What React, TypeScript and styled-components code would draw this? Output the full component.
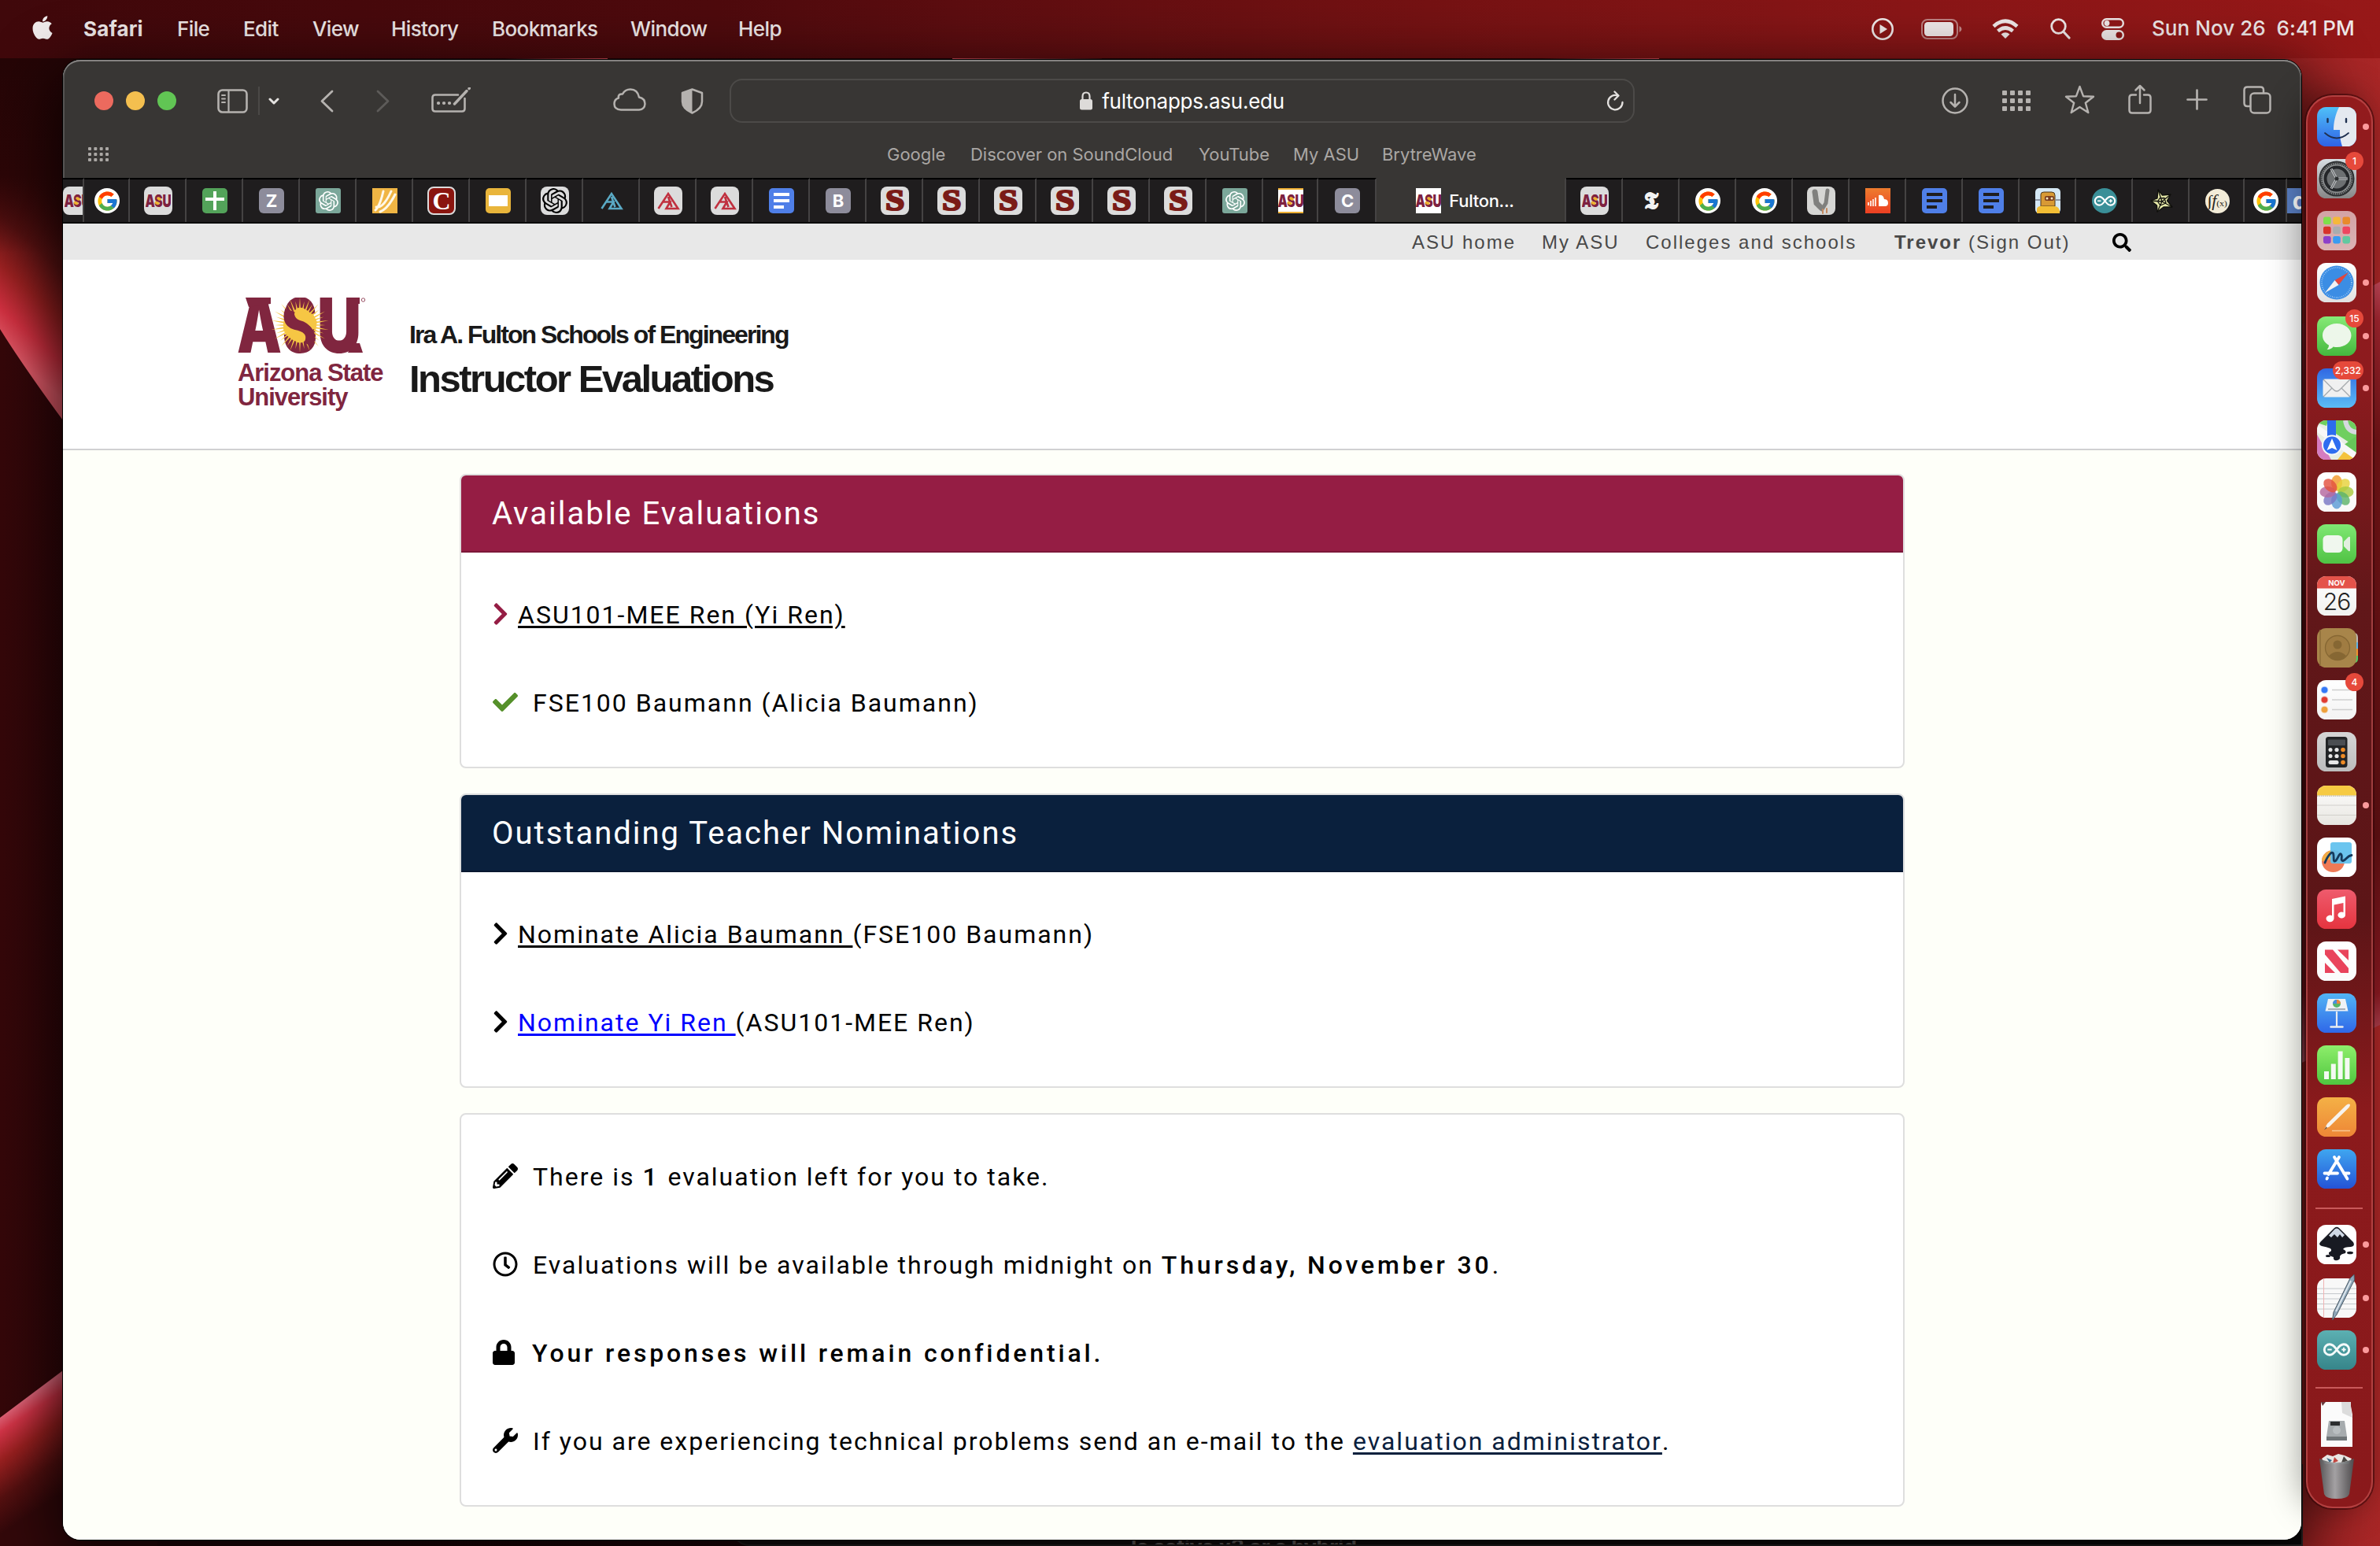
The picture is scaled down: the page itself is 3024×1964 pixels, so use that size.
import React from 'react';
import styled, { createGlobalStyle, css } from 'styled-components';
import { FaApple, FaChevronRight, FaCheck, FaPencilAlt, FaRegClock, FaLock, FaWrench, FaSearch } from 'react-icons/fa';
import { FcGoogle } from 'react-icons/fc';
import { SiOpenai } from 'react-icons/si';

const GlobalStyle = createGlobalStyle`
  *, *::before, *::after { box-sizing: border-box; }
  html, body { margin: 0; padding: 0; background: #1d0406; }
  body { width: 3024px; height: 1964px; overflow: hidden; }
  svg { display: block; flex: none; }
`;

const ui = css`
  font-family: Inter, "Liberation Sans", sans-serif;
`;

const Desktop = styled.div`
  position: relative;
  width: 3024px;
  height: 1964px;
  overflow: hidden;
  display: flex;
  flex-direction: column;
  isolation: isolate;
`;

const WallpaperLayer = styled.div`
  position: absolute;
  inset: 0;
  z-index: -1;
`;

const BackWindow = styled.div`
  position: absolute;
  left: 930px;
  top: 1860px;
  width: 1996px;
  height: 104px;
  padding: 88px 0 0 505px;
  border-bottom-left-radius: 22px;
  background: linear-gradient(90deg, #191414, #14100f 60%, #0a0a0a);
  border: 2px solid #2e2a2a;
  color: #8a8482;
  font: 700 27px/32px Inter, "Liberation Sans", sans-serif;
  letter-spacing: -0.4px;
  white-space: nowrap;
  overflow: hidden;
`;

/* ---------- menu bar ---------- */

const MenuBar = styled.header`
  ${ui}
  height: 74px;
  flex: none;
  display: flex;
  align-items: center;
  padding-left: 38px;
  padding-bottom: 1px;
  background: linear-gradient(90deg, #40080b 0%, #4e0a0d 30%, #5c0d10 40%, #751213 60%, #8a1617 80%, #971818 100%);
  color: #f0e9e9;
  font-size: 26px;
  font-weight: 500;
  white-space: nowrap;
`;

const MenuApple = styled.div`
  width: 68px;
  margin-top: -4px;
  margin-left: -1px;
  margin-right: 1px;
`;

const MenuItem = styled.div<{ $w: number; $bold?: boolean; $ls?: number }>`
  width: ${p => p.$w}px;
  margin-top: -1px;
  font-weight: ${p => (p.$bold ? 700 : 500)};
  letter-spacing: ${p => p.$ls ?? -0.6}px;
`;

const StatusArea = styled.div`
  margin-left: auto;
  display: flex;
  align-items: center;
`;

const StatusIcon = styled.div<{ $w: number }>`
  width: ${p => p.$w}px;
`;

const Clock = styled.div`
  width: 290px;
  margin-top: -2px;
  letter-spacing: 0.05px;
  white-space: pre;
`;

/* ---------- window ---------- */

const Workspace = styled.div`
  flex: 1;
  display: flex;
  align-items: flex-start;
  padding: 2px 9px 8px 80px;
`;

const Window = styled.main`
  width: 2844px;
  height: 1880px;
  flex: none;
  display: flex;
  flex-direction: column;
  border-radius: 22px;
  overflow: hidden;
  background: #fefff9;
  box-shadow: 0 0 0 1px #000, 0 24px 80px 10px rgba(0, 0, 0, 0.75);
`;

const Chrome = styled.div`
  ${ui}
  background: #383634;
  border-radius: 22px 22px 0 0;
  box-shadow: inset 0 2px 0 #858281, inset 2px 0 0 #555352, inset -2px 0 0 #555352;
`;

const Toolbar = styled.div`
  height: 104px;
  display: flex;
  align-items: center;
  padding-left: 40px;
  color: #b5b2af;
`;

const Lights = styled.div`
  display: flex;
  gap: 16px;
`;

const Light = styled.i<{ $c: string }>`
  width: 24px;
  height: 24px;
  border-radius: 50%;
  background: ${p => p.$c};
`;

const Tool = styled.div<{ $ml: number; $w: number; $c?: string; $up?: number }>`
  margin-left: ${p => p.$ml}px;
  width: ${p => p.$w}px;
  flex: none;
  padding-bottom: ${p => p.$up ?? 0}px;
  color: ${p => p.$c ?? 'inherit'};
`;

const Divider = styled.i`
  width: 2px;
  height: 36px;
  margin-left: 13px;
  background: #4b4947;
`;

const AddressBar = styled.div`
  width: 1150px;
  height: 56px;
  margin-left: 33px;
  border: 2px solid #4c4a48;
  border-radius: 16px;
  display: grid;
  grid-template-columns: 1fr auto 1fr;
  align-items: center;
  color: #fff;
  font-size: 26px;
  letter-spacing: -0.25px;
`;

const Url = styled.div`
  grid-column: 2;
  display: flex;
  align-items: center;
  gap: 12px;
`;

const Reload = styled.div`
  justify-self: end;
  padding-right: 11px;
  color: #e3e1df;
`;

const BookmarkRow = styled.div`
  height: 46px;
  padding: 0 0 14px 32px;
  display: flex;
  align-items: center;
  color: #aaa7a4;
  font-size: 22px;
  white-space: nowrap;
`;

const BookmarkGrid = styled.div`
  width: 1015px;
`;

const Bookmark = styled.div<{ $w: number }>`
  width: ${p => p.$w}px;
  letter-spacing: -0.02px;
`;

const TabStrip = styled.div`
  height: 58px;
  display: flex;
  background: #1f1d1e;
  border-bottom: 2px solid #000;
`;

const Tab = styled.div<{ $w?: number; $active?: boolean; $clip?: boolean }>`
  width: ${p => p.$w ?? 72}px;
  flex: none;
  display: flex;
  align-items: center;
  justify-content: ${p => (p.$clip ? 'flex-start' : 'center')};
  overflow: hidden;
  gap: 10px;
  padding: ${p => (p.$active ? '0 14px 0 0' : p.$clip ? '0' : '0 0 0 2px')};
  color: #fff;
  font-size: 22px;
  font-weight: 500;
  letter-spacing: -0.3px;
  border-right: 2px solid #454343;
  border-top: 2px solid ${p => (p.$active ? '#383634' : '#000')};
  background: ${p => (p.$active ? '#383634' : 'transparent')};
`;

const FavBox = styled.div<{ $bg?: string; $r?: number; $s?: number }>`
  width: ${p => p.$s ?? 32}px;
  height: ${p => p.$s ?? 32}px;
  flex: none;
  border-radius: ${p => p.$r ?? 6}px;
  background: ${p => p.$bg ?? 'transparent'};
  display: flex;
  align-items: center;
  justify-content: center;
  overflow: hidden;
  color: #fff;
`;

const FavRing = styled(FavBox)`
  border: 2px solid #dcdcdc;
`;

const FavLetter = styled.b<{ $f?: string; $size?: number; $c?: string }>`
  font-family: ${p => p.$f ?? 'Inter'}, "Liberation Sans", sans-serif;
  font-size: ${p => p.$size ?? 22}px;
  line-height: 1;
  color: ${p => p.$c ?? '#fff'};
`;

/* ---------- ASU page ---------- */

const UtilityNav = styled.nav`
  height: 46px;
  padding: 2px 0 0 1714px;
  display: flex;
  align-items: center;
  background: #e8e8e8;
  color: #484848;
  font: 400 24px/28px "Liberation Sans", Arial, sans-serif;
  letter-spacing: 2px;
  white-space: nowrap;
`;

const NavLink = styled.span<{ $w: number }>`
  width: ${p => p.$w}px;
`;

const SiteHeader = styled.div`
  height: 242px;
  padding: 48px 0 0 222px;
  display: flex;
  background: #fff;
  border-bottom: 2px solid #d0d0d2;
  font-family: "Liberation Sans", Arial, sans-serif;
`;

const Brand = styled.div`
  width: 218px;
`;

const BrandName = styled.div`
  margin-top: 8px;
  color: #80263f;
  font-size: 31px;
  font-weight: 700;
  line-height: 31px;
  letter-spacing: -1.05px;
  white-space: nowrap;
`;

const SiteTitles = styled.div`
  padding-top: 25px;
  color: #191919;
  font-weight: 700;
  white-space: nowrap;
`;

const College = styled.div`
  font-size: 32px;
  line-height: 44px;
  letter-spacing: -1.95px;
`;

const SiteName = styled.div`
  margin-top: 1px;
  font-size: 49px;
  line-height: 66px;
  letter-spacing: -2.5px;
`;

const Content = styled.div`
  flex: 1;
  padding: 30px 0 0 504px;
  display: flex;
  flex-direction: column;
  gap: 32px;
  background: #fefff9;
  font-family: Roboto, sans-serif;
`;

const Card = styled.section<{ $h: number }>`
  width: 1836px;
  height: ${p => p.$h}px;
  flex: none;
  background: #fff;
  border: 2px solid #dedede;
  border-radius: 8px;
  overflow: hidden;
`;

const CardHead = styled.h2<{ $bg: string; $edge: string }>`
  height: 98px;
  margin: 0;
  padding: 0 38px 0 39px;
  background: ${p => p.$bg};
  border-bottom: 2px solid ${p => p.$edge};
  color: #fff;
  font-size: 40px;
  font-weight: 400;
  line-height: 98px;
  letter-spacing: 2px;
`;

const CardBody = styled.div`
  padding: 55px 0 0 40px;
  display: flex;
  flex-direction: column;
  gap: 64px;
`;

const Line = styled.div`
  height: 48px;
  display: flex;
  align-items: center;
  color: #000;
  font-size: 32px;
  line-height: 48px;
  letter-spacing: 2px;
  white-space: pre;
`;

const LineIcon = styled.span<{ $w: number; $c?: string }>`
  width: ${p => p.$w}px;
  flex: none;
  margin-top: -2px;
  color: ${p => p.$c ?? '#000'};
`;

const ChevronIcon = styled(FaChevronRight)`
  width: 20px;
  height: 32px;
`;

const LockIcon = styled(FaLock)`
  width: 28px;
  height: 32px;
`;

const A = styled.a<{ $c?: string }>`
  color: ${p => p.$c ?? '#000'};
  text-decoration: underline;
  text-decoration-thickness: 3px;
  text-underline-offset: 3px;
`;

const Strong = styled.strong`
  font-weight: 500;
  letter-spacing: 3.86px;
`;

/* ---------- dock ---------- */

const Dock = styled.aside`
  ${ui}
  position: relative;
  width: 85px;
  height: 1795px;
  flex: none;
  margin: 45px 0 0 6px;
  padding: 13px 0 0 12px;
  border: 2px solid rgba(205, 90, 90, 0.6);
  border-radius: 34px;
  background: linear-gradient(180deg, #921b1d 0%, #8d1b1e 20%, #611719 36%, #5c1517 58%, #8b1a1c 72%, #8a191b 100%);
  box-shadow: 0 0 0 2px rgba(50, 4, 6, 0.55), -6px 0 44px rgba(0, 0, 0, 0.38);
  display: flex;
  flex-direction: column;
`;

const DockItem = styled.div<{ $mb?: number; $h?: number; $run?: boolean }>`
  position: relative;
  width: 50px;
  height: ${p => p.$h ?? 50}px;
  margin-bottom: ${p => p.$mb ?? 16}px;
  flex: none;
  ${p =>
    p.$run &&
    css`
      &::after {
        content: '';
        position: absolute;
        left: 58px;
        top: 21px;
        width: 8px;
        height: 8px;
        border-radius: 50%;
        background: #fb9a9c;
      }
    `}
`;

const DockRule = styled.i<{ $mb: number }>`
  width: 60px;
  height: 2px;
  margin: 0 0 ${p => p.$mb}px -2px;
  flex: none;
  background: #c9595a;
`;

const Badge = styled.span`
  position: absolute;
  right: -9px;
  top: -9px;
  min-width: 23px;
  height: 23px;
  padding: 0 3px;
  border-radius: 12px;
  background: #e6493b;
  color: #fff;
  font-size: 12px;
  font-weight: 500;
  line-height: 23px;
  text-align: center;
`;

/* ---------- drawings ---------- */

function Wallpaper() {
  return (
    <svg width="3024" height="1964" viewBox="0 0 3024 1964">
      <defs>
        <linearGradient id="wpBase" x1="0" x2="1">
          <stop offset="0" stopColor="#350709" />
          <stop offset="0.1" stopColor="#26050a" />
          <stop offset="0.6" stopColor="#200406" />
          <stop offset="0.9" stopColor="#8e1c1d" />
          <stop offset="1" stopColor="#a92727" />
        </linearGradient>
        <linearGradient id="wpTop" gradientUnits="userSpaceOnUse" x1="130" y1="300" x2="4" y2="440">
          <stop offset="0" stopColor="#2d0607" />
          <stop offset="0.35" stopColor="#5a1212" />
          <stop offset="0.6" stopColor="#982020" />
          <stop offset="0.82" stopColor="#d03040" />
          <stop offset="1" stopColor="#e05a68" />
        </linearGradient>
        <linearGradient id="wpTopFade" x1="0" y1="0" x2="0" y2="1">
          <stop offset="0" stopColor="#250506" />
          <stop offset="0.45" stopColor="#2c0607" />
          <stop offset="0.75" stopColor="#3c090a" stopOpacity="0" />
        </linearGradient>
        <linearGradient id="wpLow" gradientUnits="userSpaceOnUse" x1="20" y1="1785" x2="90" y2="1890">
          <stop offset="0" stopColor="#e0667a" />
          <stop offset="0.14" stopColor="#d23447" />
          <stop offset="0.38" stopColor="#9b2020" />
          <stop offset="0.7" stopColor="#551010" />
          <stop offset="1" stopColor="#33080a" />
        </linearGradient>
        <linearGradient id="wpRight" x1="0" y1="0" x2="0" y2="1">
          <stop offset="0" stopColor="#c4485a" />
          <stop offset="0.05" stopColor="#a32630" />
          <stop offset="0.2" stopColor="#751518" />
          <stop offset="0.7" stopColor="#611114" />
          <stop offset="0.9" stopColor="#8a1a22" />
          <stop offset="1" stopColor="#d86a80" />
        </linearGradient>
        <linearGradient id="wpEdgeUp"><stop offset="0" stopColor="#d8505c" stopOpacity="0" /><stop offset="1" stopColor="#d8505c" /></linearGradient>
        <linearGradient id="wpEdgeDown"><stop offset="0" stopColor="#d8505c" /><stop offset="1" stopColor="#d8505c" stopOpacity="0.100" /></linearGradient>
      </defs>
      <rect width="3024" height="1964" fill="url(#wpBase)" />
      <path d="M0 74H200V700Q120 590 80 534Q30 466 0 418Z" fill="url(#wpTop)" />
      <rect y="74" width="200" height="330" fill="url(#wpTopFade)" />
      <path d="M0 1801L80 1741L200 1660V1964H0Z" fill="url(#wpLow)" />
      <path d="M2900 425L3024 358V1302L2900 1362Z" fill="url(#wpRight)" />
      <path d="M640 74H772V75.500H640Z" fill="url(#wpEdgeUp)" />
      <path d="M1210 74H1400V75.500H1210Z" fill="url(#wpEdgeDown)" />
      <path d="M1960 74H2108V75.500H1960Z" fill="url(#wpEdgeUp)" />
    </svg>
  );
}

const stroke = { fill: 'none', stroke: 'currentColor', strokeLinecap: 'round', strokeLinejoin: 'round' } as const;

function DotGrid({ w, h, s }: { w: number; h: number; s: number }) {
  const cells: React.ReactNode[] = [];
  for (let r = 0; r < 3; r++)
    for (let c = 0; c < 4; c++)
      cells.push(<rect key={`${r}-${c}`} x={(c * (w - s)) / 3} y={(r * (h - s)) / 2} width={s} height={s} rx={1} fill="currentColor" />);
  return <svg width={w} height={h}>{cells}</svg>;
}

function AsuLogo() {
  const rays = Array.from({ length: 36 }, (_, i) => {
    const t = (i / 36) * Math.PI * 2;
    const d = 0.06;
    const p = (a: number, r: number) => `${79 + Math.cos(a) * r * 0.95},${35 + Math.sin(a) * r * 0.9}`;
    const len = 34 + (i % 2) * 5;
    return `M${p(t - d, 20)}L${p(t, len)}L${p(t + d, 20)}Z`;
  }).join('');
  const letter = { fontFamily: 'Inter, "Liberation Sans", sans-serif', fontWeight: 900, fontSize: 96, fill: '#80263f', lengthAdjust: 'spacingAndGlyphs' } as const;
  return (
    <svg width="166" height="72" viewBox="0 0 166 72">
      <text {...letter} x="-1" y="70" textLength="57">A</text>
      <text {...letter} x="101" y="70" textLength="56">U</text>
      <path d="M10 0H42V8L14 12Z M142 0H155V8H142Z M146 58L155 58L159 70H140Z" fill="#80263f" />
      <ellipse cx="79" cy="35" rx="21" ry="23" fill="#f6c644" />
      <text {...letter} x="56.500" y="70" textLength="45" fontWeight={800}>S</text>
      <path d={rays} fill="#f6c644" />
      <path d="M72 21Q75 13 84 14Q95 19 101 31Q99 40 95 41Q89 31 79 29Q73 27 72 21Z" fill="#f6c644" />
      <path d="M86 50Q83 57 75 56Q63 52 58 40Q59 31 63 29Q69 39 79 41Q86 44 86 50Z" fill="#f6c644" />
      <path d="M66 16Q60 34 78 36Q98 42 90 60" fill="none" stroke="#80263f" strokeWidth="12" />
      <circle cx="159.500" cy="3" r="2.200" fill="none" stroke="#80263f" strokeWidth="0.800" />
    </svg>
  );
}

function AsuMark({ w = 32 }: { w?: number }) {
  return (
    <svg width={w} height="18" viewBox="0 0 32 18">
      <text x="-0.500" y="16.500" fontFamily="Inter, sans-serif" fontWeight="900" fontSize="21.500" fill="#7d2140" textLength="33" lengthAdjust="spacingAndGlyphs">ASU</text>
      <ellipse cx="17" cy="6.500" rx="3" ry="1.800" fill="#eeb22e" transform="rotate(25 17 6.500)" />
      <ellipse cx="14.500" cy="12" rx="3" ry="1.800" fill="#eeb22e" transform="rotate(25 14.500 12)" />
    </svg>
  );
}

const FavAsu = ({ bg = '#dcdcdc', s = 36 }: { bg?: string; s?: number }) => (
  <FavBox $bg={bg} $s={s} $r={s === 36 ? 8 : 0}><AsuMark /></FavBox>
);
const FavGoogle = () => <FavBox $bg="#fff" $r={16}><FcGoogle size={29} /></FavBox>;
const FavLetterTile = ({ ch }: { ch: string }) => <FavBox $bg="#8d8c9b"><FavLetter>{ch}</FavLetter></FavBox>;
const FavGpt = () => <FavBox $bg="#7ba79a" $r={3}><SiOpenai size={25} /></FavBox>;
const FavS = () => (
  <FavBox $bg="#dcdcdc" $s={36} $r={8}>
    <svg width="34" height="34" viewBox="0 0 34 34">
      <text x="17" y="29" textAnchor="middle" fontFamily="Liberation Serif, serif" fontWeight="700" fontSize="37" fill="#7a1b17" stroke="#7a1b17" strokeWidth="2.200" textLength="24" lengthAdjust="spacingAndGlyphs">S</text>
    </svg>
  </FavBox>
);
const FavDocs = ({ dark }: { dark?: boolean }) => (
  <FavBox $bg="#4f7fe8" $r={5}>
    <svg width="20" height="20" fill={dark ? '#1f1d1e' : '#fff'}><rect width="20" height="4" /><rect y="8" width="20" height="4" /><rect y="16" width="13" height="4" /></svg>
  </FavBox>
);
const FavTri = ({ c, bg }: { c: string; bg?: string }) => (
  <FavBox $bg={bg} $s={36} $r={8}>
    <svg width="32" height="32" viewBox="0 0 32 32" fill="none" stroke={c} strokeWidth="2.600">
      <path d="M3.500 26L16 7L28.500 26H13.500L18.500 17.500H9.500M16 11L20.500 24" />
    </svg>
  </FavBox>
);

const robot = (
  <svg width="32" height="32" viewBox="0 0 32 32">
    <rect width="32" height="32" rx="5" fill="#d5e8f5" />
    <path d="M7 8Q7 5 11 5H21Q25 5 25 9V23H7Z" fill="#d89a35" stroke="#4a3518" />
    <path d="M2 32V26Q4 22 10 23H24Q31 23 31 31V32Z" fill="#f3be35" />
    <rect x="12" y="10" width="12" height="6" rx="2" fill="#7a3c20" /><circle cx="15" cy="13" r="1.500" fill="#f5e8c0" /><circle cx="21" cy="13" r="1.500" fill="#f5e8c0" />
    <path d="M0 15H6M26 15H32" stroke="#445" />
  </svg>
);
const web = (
  <svg width="32" height="32" viewBox="0 0 32 32" fill="none" stroke="#0f0f0c" strokeWidth="1.300" strokeLinejoin="round">
    <path d="M12 2L17.500 9L28 8L23.500 16L30 24L19 24L11 30L10.500 22L3 16L11 13Z" fill="#e6e8a8" />
    <path d="M17 17L12 2M17 17L28 8M17 17L30 24M17 17L11 30M17 17L3 16M14 13L20 12.500L22 19L15 22L11.500 17Z" />
  </svg>
);

const loops = 'M20 10C16 4 13 2.500 10 2.500A7.500 7.500 0 0 0 10 17.500C13 17.500 16 16 20 10C24 4 27 2.500 30 2.500A7.500 7.500 0 0 1 30 17.500C27 17.500 24 16 20 10Z';

function InfinityMark({ w, c = '#fff', sw = 3 }: { w: number; c?: string; sw?: number }) {
  return (
    <svg width={w} height={w / 2} viewBox="0 0 40 20" fill="none" stroke={c} strokeWidth={sw}>
      <path d={loops} />
      <path d="M7 10H13M27 10H33M30 7V13" strokeWidth={sw * 0.65} />
    </svg>
  );
}

function Tile({ id, a, b, children }: { id: string; a: string; b: string; children?: React.ReactNode }) {
  return (
    <svg width="50" height="50" viewBox="0 0 50 50">
      <defs>
        <linearGradient id={id} x1="0" y1="0" x2="0" y2="1"><stop offset="0" stopColor={a} /><stop offset="1" stopColor={b} /></linearGradient>
        <clipPath id={`${id}c`}><rect width="50" height="50" rx="11.500" /></clipPath>
      </defs>
      <g clipPath={`url(#${id}c)`}>
        <rect width="50" height="50" fill={`url(#${id})`} />
        {children}
      </g>
    </svg>
  );
}

const launchColors = ['#7ee04a', '#f5b83a', '#e88a2c', '#d8322a', '#a9acae', '#ef4560', '#8d3fc9', '#3a9bf0', '#62c8a0'];
const petals = ['#f39a2d', '#e6d23a', '#a8c93f', '#5db36b', '#5b9bd6', '#7a78c4', '#b5689f', '#e3503e'];

function DockApps() {
  return (
    <>
      <DockItem $run>
        <Tile id="finder" a="#4fc0f8" b="#2f62e6">
          <path d="M28 0C23 10 21 20 21 29H29C28.500 36 30 44 32 50H50V0Z" fill="#e4e9f0" />
          <path d="M10 33Q25 46 40 33" fill="none" stroke="#1f3050" strokeWidth="1.800" strokeLinecap="round" />
          <path d="M13.500 15V19M37 15V19" stroke="#1f3050" strokeWidth="2.400" strokeLinecap="round" />
        </Tile>
      </DockItem>
      <DockItem>
        <Tile id="settings" a="#d7dde2" b="#878787">
          <circle cx="25" cy="25" r="21.500" fill="#8e9192" stroke="#2d2f31" strokeWidth="2" />
          <circle cx="25" cy="25" r="19.500" fill="none" stroke="#3b3d3f" strokeWidth="3" strokeDasharray="1.500 1" />
          <circle cx="25" cy="25" r="14.500" fill="#6d7072" stroke="#25272a" strokeWidth="4" />
          <path d="M25 25H39M25 25L18 12.500M25 25L18 37.500" stroke="#c3c6c8" strokeWidth="3" />
          <path d="M25 25H39M25 25L18 12.500M25 25L18 37.500" stroke="#2d2f31" strokeWidth="0.800" />
          <circle cx="25" cy="25" r="2.500" fill="#2d2f31" />
        </Tile>
        <Badge>1</Badge>
      </DockItem>
      <DockItem>
        <Tile id="launch" a="#d3a3a5" b="#dbb3b4">
          {launchColors.map((c, i) => <rect key={c} x={8 + (i % 3) * 12.2} y={7.5 + Math.floor(i / 3) * 12.2} width="9.600" height="9.600" rx="2.400" fill={c} />)}
        </Tile>
      </DockItem>
      <DockItem $run $mb={18}>
        <Tile id="safari" a="#ffffff" b="#e1e1e1">
          <circle cx="25" cy="25" r="21.500" fill="#3b8de4" />
          <circle cx="25" cy="25" r="19" fill="none" stroke="#9cc9f5" strokeWidth="2" strokeDasharray="0.800 1.700" />
          <path d="M40 12L27.500 28L22.500 22Z" fill="#e2463d" /><path d="M10 38L22.500 22L27.500 28Z" fill="#f2f2f2" />
        </Tile>
      </DockItem>
      <DockItem $run>
        <Tile id="messages" a="#86ea76" b="#45b83e">
          <path d="M25 9C14.500 9 7 16 7 24C7 30 10.500 34 15 36.500C15 39 14 41 12.500 42C17 42 19.500 40 20.500 38.500C33 41 43.500 34 43.500 24C43.500 16 35.500 9 25 9Z" fill="#edf7ea" />
        </Tile>
        <Badge>15</Badge>
      </DockItem>
      <DockItem $run>
        <Tile id="mail" a="#3168e3" b="#5bbdf6">
          <rect x="7.500" y="13.500" width="35" height="23" rx="2.500" fill="#f0f0f0" />
          <path d="M8 14L21 27Q25 31 29 27L42 14M8 36L19 25M42 36L31 25" fill="none" stroke="#a4a8ac" strokeWidth="1.300" />
        </Tile>
        <Badge>2,332</Badge>
      </DockItem>
      <DockItem>
        <Tile id="maps" a="#e8eee4" b="#e8eee4">
          <path d="M0 0H14L12 7L0 3Z M24 0H50V34L24 17Z" fill="#6fcf5f" />
          <path d="M0 18L18 50H0Z" fill="#d57cc0" /><path d="M26 50L34 40L50 46V50Z" fill="#f4c33c" /><path d="M30 34L50 20V44Z" fill="#67c659" />
          <path d="M36 0Q38 14 50 15" fill="none" stroke="#d5d9de" strokeWidth="6" />
          <path d="M0 10L50 46" stroke="#f7f7f7" strokeWidth="8" />
          <rect x="13" width="11" height="24" fill="#2c6cee" />
          <circle cx="19" cy="31.500" r="12" fill="#2f6df0" stroke="#f4f6f8" strokeWidth="2" />
          <path d="M19 23L25.500 38L19 35L12.500 38Z" fill="#fff" />
        </Tile>
      </DockItem>
      <DockItem>
        <Tile id="photos" a="#ffffff" b="#f8f8f8">
          {petals.map((c, i) => <ellipse key={c} cx="25" cy="13.500" rx="7" ry="10" fill={c} opacity="0.820" transform={`rotate(${i * 45} 25 25)`} />)}
        </Tile>
      </DockItem>
      <DockItem>
        <Tile id="facetime" a="#7fe873" b="#50c244">
          <rect x="7.500" y="14" width="25" height="22" rx="5.500" fill="#f0f7ee" /><path d="M34 22L40 16Q42 15 42 17V33Q42 35 40 34L34 28Z" fill="#e2efe0" />
        </Tile>
      </DockItem>
      <DockItem>
        <Tile id="calendar" a="#ffffff" b="#f1f1ef">
          <rect width="50" height="15.500" fill="#e4534a" />
          <text x="25" y="12" textAnchor="middle" fontFamily="Inter, sans-serif" fontWeight="700" fontSize="9.500" fill="#fff">NOV</text>
          <text x="25" y="42.500" textAnchor="middle" fontFamily="Inter, sans-serif" fontWeight="300" fontSize="30" letterSpacing="-1" fill="#222">26</text>
        </Tile>
      </DockItem>
      <DockItem>
        <svg width="54" height="50" viewBox="0 0 54 50">
          <path d="M42 6H47Q52 6 52 12V18H42Z" fill="#bcb8b0" /><rect x="42" y="18" width="10" height="8" fill="#5fb4e6" /><rect x="42" y="26" width="10" height="9" fill="#ee9231" /><path d="M42 35H52V39Q52 44 47 44H42Z" fill="#54cd62" />
          <rect width="50" height="50" rx="11.500" fill="#a8854a" /><path d="M4 2V48" stroke="#8c6c38" strokeWidth="1.500" />
          <circle cx="26" cy="25" r="15.500" fill="#a07c42" stroke="#866733" strokeWidth="1.300" /><circle cx="26" cy="21" r="5.500" fill="#866733" /><path d="M15 35Q26 25 37 35Q32 40.500 26 40.500Q20 40.500 15 35Z" fill="#866733" />
        </svg>
      </DockItem>
      <DockItem>
        <Tile id="reminders" a="#ffffff" b="#f3f3f3">
          {['#3478f6', '#e03b30', '#eda13b'].map((c, i) => (
            <g key={c}><circle cx="9.500" cy={12.5 + i * 12.5} r="3.800" fill={c} stroke={c} strokeOpacity="0.350" strokeWidth="2" /><path d={`M19 ${12.5 + i * 12.5}H45`} stroke="#cfcfcf" strokeWidth="1.500" /></g>
          ))}
        </Tile>
        <Badge>4</Badge>
      </DockItem>
      <DockItem $mb={18}>
        <Tile id="calc" a="#d6d6d6" b="#bdbdbd">
          <rect x="11" y="6" width="27.500" height="39" rx="3.500" fill="#222426" /><rect x="14" y="9.500" width="22" height="7.500" rx="1" fill="#4b4e52" />
          {[22.5, 30.5, 38.5].map(y => (
            <g key={y}><rect x="14.500" y={y - 2.5} width={y > 38 ? 13 : 5} height="5" rx="2.500" fill="#e6e6e6" />{y < 38 && <circle cx="25" cy={y} r="2.600" fill="#e6e6e6" />}<circle cx="33" cy={y} r="2.800" fill="#ee8c26" /></g>
          ))}
        </Tile>
      </DockItem>
      <DockItem $run>
        <Tile id="notes" a="#fdfdfc" b="#e8e6e1">
          <rect width="50" height="12.500" fill="#f6ca42" /><path d="M0 13.200H50" stroke="#b9b4a5" strokeWidth="1.200" strokeDasharray="1.500 1" /><path d="M0 25H50M0 37.500H50" stroke="#d2d0cb" strokeWidth="1" />
        </Tile>
      </DockItem>
      <DockItem>
        <Tile id="freeform" a="#ffffff" b="#ffffff">
          <ellipse cx="20.500" cy="30" rx="14.500" ry="14" fill="#ef7a56" /><path d="M6 30A14.500 14 0 0 1 18 16.500L17 28Z" fill="#f2ad45" />
          <rect x="17" y="6" width="27" height="27" rx="3" fill="#5ec0ee" opacity="0.920" />
          <path d="M10 32C14 22 19 17 20.500 20C22 24 20 31 23 30C26 29 28 19 30.500 21C33 23 29 30 33 29.500C37 29 38 23 44 22.500" fill="none" stroke="#153a5c" strokeWidth="2.800" strokeLinecap="round" />
        </Tile>
      </DockItem>
      <DockItem>
        <Tile id="music" a="#ef5b6d" b="#e5343f">
          <path d="M19 12L36 8.500V32.500A4.800 4 0 1 1 33.500 29V17L21.500 19.500V37A5 4.300 0 1 1 19 33.200Z" fill="#fff" />
        </Tile>
      </DockItem>
      <DockItem>
        <Tile id="news" a="#ffffff" b="#fbfbfb">
          <path d="M10 10.500H20L40 34V40H30L10 16.500Z" fill="#e9445c" /><path d="M26 10.500H40V24Z M10 27V40H23Z" fill="#e9445c" />
        </Tile>
      </DockItem>
      <DockItem>
        <Tile id="keynote" a="#52b5f5" b="#2f67e8">
          <path d="M14 7H36L39.500 22.500H10.500Z" fill="#eff2f5" /><circle cx="25" cy="13" r="5" fill="#55b56a" /><path d="M25 13V8A5 5 0 0 1 30 13Z" fill="#e98440" /><path d="M25 13H20A5 5 0 0 1 25 8Z" fill="#4a8de0" />
          <path d="M14 20H36" stroke="#8d97a3" strokeWidth="1.300" /><path d="M25 23V42" stroke="#e8ecf1" strokeWidth="2.200" /><path d="M17.500 42.500H32.500" stroke="#e8ecf1" strokeWidth="2.400" strokeLinecap="round" />
        </Tile>
      </DockItem>
      <DockItem>
        <Tile id="numbers" a="#8eee6b" b="#4fc63f">
          <path d="M9 33H15V43H9Z M17.800 23.500H23.800V43H17.800Z M26.600 7.500H32.600V43H26.600Z M35.400 16H41.400V43H35.400Z" fill="#f4faf2" />
        </Tile>
      </DockItem>
      <DockItem>
        <Tile id="pages" a="#f4b146" b="#ee8636">
          <path d="M9.500 40L13 33.500L37 10Q41 7.500 42 9.500Q42 12 38 15.500L15.500 37.500Z" fill="#f7f3ee" /><path d="M9 41.500L11.500 37L13 39Z" fill="#7a5a40" /><path d="M19 42.500H42" stroke="#f8c795" strokeWidth="1.500" />
        </Tile>
      </DockItem>
      <DockItem $mb={24}>
        <Tile id="appstore" a="#3fa6f0" b="#2453d6">
          <g stroke="#fff" strokeWidth="3.800" strokeLinecap="round" fill="none"><path d="M28 10L14.500 32M22 10L38.500 37.500M9.500 30.500H26M34 30.500H40.500M13 36.500L12.500 37.500" /></g>
        </Tile>
      </DockItem>
      <DockRule $mb={20} />
      <DockItem $run $mb={18}>
        <Tile id="inkscape" a="#ffffff" b="#ffffff">
          <path d="M22 4Q25 1.500 28 4L46 22Q49 27 43 28Q34 28 33 31Q38 33 36 36Q30 37 29 40Q30 44 26 45Q20 46 21 41Q14 39 15 35Q20 33 17 30Q12 28 6 27Q1 25 4.500 21.500Z" fill="#181a22" />
          <path d="M22.500 5.500Q25 3.500 27.500 5.500L35 13L32 16L29 12L26 16L22 12L18 16L15 13.500Z" fill="#cfd8e4" />
          <ellipse cx="42" cy="35.500" rx="4" ry="1.800" fill="#181a22" /><ellipse cx="14" cy="39.500" rx="3" ry="1.500" fill="#181a22" />
        </Tile>
      </DockItem>
      <DockItem $run>
        <svg width="50" height="56" viewBox="0 0 50 56" overflow="visible">
          <rect width="50" height="50" rx="11.500" fill="#f8f8f8" /><path d="M0 13H50M0 19.500H50M0 26H50M0 32.500H50M0 39H50" stroke="#c4c8cc" strokeWidth="1" /><path d="M8.500 0V50" stroke="#f0b4b4" strokeWidth="1" />
          <path d="M19.500 53L21 43L42 0L47 -5L47.500 2L25 46Z" fill="#8fa6b8" stroke="#4a5965" strokeWidth="1" /><path d="M24 42L43 3" stroke="#dbe5ec" strokeWidth="2" />
        </svg>
      </DockItem>
      <DockItem $run $mb={22}>
        <Tile id="arduino" a="#5cb0b2" b="#36858a">
          <svg x="7" y="15.500" width="36" height="18" viewBox="0 0 40 20" fill="none" stroke="#f4fafa" strokeWidth="3.200">
            <path d={loops} /><path d="M7 10H13M27 10H33M30 7V13" strokeWidth="2" />
          </svg>
        </Tile>
      </DockItem>
      <DockRule $mb={17} />
      <DockItem $h={57} $mb={9}>
        <svg width="50" height="57" viewBox="0 0 50 57">
          <path d="M5 0H42L45 16V57H5Z" fill="#fbfbfb" /><path d="M31 0H43V8L45 20L32 14Z" fill="#dcdcdc" /><path d="M5 0H11L7 5Z" fill="#6b3b3d" />
          <path d="M15 24H35L38 44V49H12V44Z" fill="#a6abae" /><path d="M12 44H38V49H12Z" fill="#6f7578" /><rect x="17" y="25" width="12" height="5" fill="#2b2d2f" /><circle cx="25" cy="36" r="5" fill="#b9bec1" />
        </svg>
      </DockItem>
      <DockItem $h={57} $mb={0}>
        <svg width="50" height="57" viewBox="0 0 50 57">
          <defs><linearGradient id="bin"><stop offset="0" stopColor="#55585a" /><stop offset="0.450" stopColor="#a5a8aa" /><stop offset="1" stopColor="#4b4e50" /></linearGradient></defs>
          <path d="M6 6L13 1L20 3L27 0L35 2L44 6L40 13H10Z" fill="#e9e7e4" /><path d="M12 5L19 8L16 11Z" fill="#3d6a87" /><path d="M22 4L27 9L20 12Z" fill="#c2463f" /><path d="M34 3L39 9L31 11Z" fill="#494542" />
          <path d="M3 6Q25 16 47 6L41 51Q39 57 25 57Q11 57 9 51Z" fill="url(#bin)" opacity="0.950" />
        </svg>
      </DockItem>
    </>
  );
}

/* ---------- tabs ---------- */

function Tabs() {
  return (
    <TabStrip>
      <Tab $w={27} $clip><FavAsu /></Tab>
      <Tab $w={58}><FavGoogle /></Tab>
      <Tab><FavAsu /></Tab>
      <Tab><FavBox $bg="#53a35a" $r={5}><svg width="24" height="24" fill="#fff"><rect x="10" width="4" height="24" /><rect y="8" width="24" height="4" /></svg></FavBox></Tab>
      <Tab><FavLetterTile ch="Z" /></Tab>
      <Tab><FavGpt /></Tab>
      <Tab>
        <FavBox $bg="#f0b544" $r={0}>
          <svg width="32" height="32" {...stroke} stroke="#fff8e8" strokeWidth="3"><path d="M4 28Q10 22 14 4M5 24Q14 26 24 4M10 30Q20 26 29 8" /></svg>
        </FavBox>
      </Tab>
      <Tab><FavRing $bg="#8a150f" $s={36} $r={8}><FavLetter $f="Liberation Serif" $size={32}>C</FavLetter></FavRing></Tab>
      <Tab><FavBox $bg="#e9b53b" $r={5}><svg width="24" height="14"><rect width="24" height="14" fill="#fff" /></svg></FavBox></Tab>
      <Tab><FavBox $bg="#dcdcdc" $s={36} $r={8}><SiOpenai size={32} color="#000" /></FavBox></Tab>
      <Tab><FavTri c="#5aa9c4" /></Tab>
      <Tab><FavTri c="#c0303f" bg="#dcdcdc" /></Tab>
      <Tab><FavTri c="#c0303f" bg="#dcdcdc" /></Tab>
      <Tab><FavDocs /></Tab>
      <Tab><FavLetterTile ch="B" /></Tab>
      {[0, 1, 2, 3, 4, 5].map(i => <Tab key={i}><FavS /></Tab>)}
      <Tab><FavGpt /></Tab>
      <Tab $w={70}><FavBox $bg="linear-gradient(#f0b134 0 2px, #fff 2px 30px, #f0b134 30px)" $r={0}><AsuMark /></FavBox></Tab>
      <Tab $w={74}><FavLetterTile ch="C" /></Tab>
      <Tab $w={241} $active><FavAsu bg="#fff" s={32} />Fulton...</Tab>
      <Tab><FavAsu /></Tab>
      <Tab>
        <svg width="32" height="32"><text x="16" y="26" textAnchor="middle" fontFamily="DejaVu Sans, DejaVu Serif, serif" fontWeight="700" fontSize="29" fill="#f2f2f2" stroke="#f2f2f2" strokeWidth="1">𝕿</text></svg>
      </Tab>
      <Tab><FavGoogle /></Tab>
      <Tab><FavGoogle /></Tab>
      <Tab>
        <FavBox $bg="#d6d6d4" $s={36} $r={8}>
          <svg width="32" height="34" fill="none" stroke="#80807e" strokeLinecap="round"><path d="M8 6L10 20L16 26" strokeWidth="7" /><path d="M24 4L22 20L17 28" strokeWidth="5" /><path d="M18 28V33M23 27V32" stroke="#c58a60" strokeWidth="2" /></svg>
        </FavBox>
      </Tab>
      <Tab>
        <FavBox $bg="linear-gradient(#ee7c2e, #ec3f22)" $r={0}>
          <svg width="26" height="16" fill="#fff"><path d="M14 1Q20 0 21 6Q26 6 26 11Q26 15 22 15H14Z" /><path d="M1 10V14M4 8V15M7 6V15M10 4V15" stroke="#fff" strokeWidth="1.600" /></svg>
        </FavBox>
      </Tab>
      <Tab><FavDocs dark /></Tab>
      <Tab><FavDocs dark /></Tab>
      <Tab>{robot}</Tab>
      <Tab><FavBox $bg="#3a8f98" $r={16}><InfinityMark w={29} /></FavBox></Tab>
      <Tab>{web}</Tab>
      <Tab $w={70}>
        <FavBox $bg="#f3ecd8" $r={16} $s={31}>
          <svg width="31" height="31"><text x="15" y="22" textAnchor="middle" fontFamily="Liberation Serif, serif" fontStyle="italic" fontSize="20" fill="#2a2620" textLength="25" lengthAdjust="spacingAndGlyphs">∫f<tspan fontSize="11" fontStyle="normal">(x)</tspan></text></svg>
        </FavBox>
      </Tab>
      <Tab $w={54}><FavGoogle /></Tab>
      <Tab $w={20} $clip><FavBox $bg="#5a7fc4" $r={0}><FavLetter $size={30}>d</FavLetter></FavBox></Tab>
    </TabStrip>
  );
}

export default function App() {
  return (
    <>
      <GlobalStyle />
      <Desktop>
        <WallpaperLayer>
          <Wallpaper />
          <BackWindow>la sativa x3 or a hybrid</BackWindow>
        </WallpaperLayer>

        <MenuBar>
          <MenuApple><FaApple size={34} color="#f0ebeb" /></MenuApple>
          <MenuItem $w={119} $bold $ls={0.15}>Safari</MenuItem>
          <MenuItem $w={84}>File</MenuItem>
          <MenuItem $w={88}>Edit</MenuItem>
          <MenuItem $w={100}>View</MenuItem>
          <MenuItem $w={128}>History</MenuItem>
          <MenuItem $w={176}>Bookmarks</MenuItem>
          <MenuItem $w={137}>Window</MenuItem>
          <MenuItem $w={60}>Help</MenuItem>
          <StatusArea>
            <StatusIcon $w={64}>
              <svg width="30" height="30" viewBox="0 0 30 30"><circle cx="15" cy="15" r="12.700" fill="none" stroke="currentColor" strokeWidth="2.600" /><path d="M11.500 9L21 15L11.500 21Z" fill="currentColor" /></svg>
            </StatusIcon>
            <StatusIcon $w={90}>
              <svg width="52" height="26" viewBox="0 0 52 26"><rect x="1" y="1" width="45" height="24" rx="7" fill="none" stroke="currentColor" strokeOpacity="0.500" strokeWidth="2" /><rect x="4" y="4" width="37" height="18" rx="4.500" fill="currentColor" /><path d="M48.500 9Q51.500 10.500 51.500 13Q51.500 15.500 48.500 17Z" fill="currentColor" opacity="0.550" /></svg>
            </StatusIcon>
            <StatusIcon $w={74}>
              <svg width="34" height="26" viewBox="0 0 34 26" fill="none" stroke="currentColor" strokeWidth="4.600"><path d="M2 9.500Q17 -4 32 9.500" /><path d="M7.500 15.500Q17 7.500 26.500 15.500" /><path d="M17 25L11.500 19.500Q17 15 22.500 19.500Z" fill="currentColor" stroke="none" /></svg>
            </StatusIcon>
            <StatusIcon $w={65}>
              <svg width="26" height="27" viewBox="0 0 26 27" {...stroke} strokeWidth="2.800"><circle cx="10.500" cy="10.500" r="8.800" /><path d="M17 17.500L24 25" strokeWidth="3.200" /></svg>
            </StatusIcon>
            <StatusIcon $w={64}>
              <svg width="29" height="28" viewBox="0 0 29 28"><rect x="1.200" y="1.200" width="26.600" height="10.600" rx="5.300" fill="none" stroke="currentColor" strokeWidth="2.400" /><circle cx="7" cy="6.500" r="3.400" fill="currentColor" /><rect y="15" width="29" height="13" rx="6.500" fill="currentColor" /><circle cx="22.500" cy="21.500" r="4" fill="#8c1717" /></svg>
            </StatusIcon>
            <Clock>Sun Nov 26  6:41 PM</Clock>
          </StatusArea>
        </MenuBar>

        <Workspace>
          <Window>
            <Chrome>
              <Toolbar>
                <Lights><Light $c="#ec6a5e" /><Light $c="#f4bf4f" /><Light $c="#61c554" /></Lights>
                <Tool $ml={52} $w={39}>
                  <svg width="39" height="31" {...stroke} strokeWidth="2.600"><rect x="1.500" y="1.500" width="36" height="28" rx="5" /><path d="M14.500 2V29" strokeWidth="2.200" /><path d="M6 8H10M6 12.500H10M6 17H10" strokeWidth="1.900" /></svg>
                </Tool>
                <Divider />
                <Tool $ml={11} $w={14} $c="#e4e2e0"><svg width="14" height="9" {...stroke} strokeWidth="3"><path d="M2 2L7 7L12 2" /></svg></Tool>
                <Tool $ml={52} $w={17}><svg width="17" height="29" {...stroke} strokeWidth="2.800"><path d="M15 2L2 14.500L15 27" /></svg></Tool>
                <Tool $ml={54} $w={17} $c="#5d5b59"><svg width="17" height="29" {...stroke} strokeWidth="2.800"><path d="M2 2L15 14.500L2 27" /></svg></Tool>
                <Tool $ml={53} $w={50} $up={2}>
                  <svg width="50" height="32" {...stroke} strokeWidth="2.600"><path d="M34 9.500H5Q1.500 9.500 1.500 13V27Q1.500 30.500 5 30.500H39Q42.500 30.500 42.500 27V14" /><path d="M31 19.500L45 4.500M48 1.500L48.500 1M31 19.500L29.500 21" strokeWidth="3.400" /><path d="M9 20H9.100M16 20H16.100M23 20H23.100" strokeWidth="4.200" /></svg>
                </Tool>
                <Tool $ml={181} $w={42} $up={4}>
                  <svg width="42" height="29" {...stroke} strokeWidth="2.500"><path d="M10 27.500Q1.500 27 1.500 20Q1.500 14 7 12.500Q6 7 12 7.500Q15 1.500 22 1.500Q31 1.500 33 11.500Q40.500 13 40.500 20Q40 27 33 27.500Z" /></svg>
                </Tool>
                <Tool $ml={44} $w={29}>
                  <svg width="29" height="33" viewBox="0 0 29 33"><path d="M14.500 1.500L27 6V17Q27 26 14.500 31.500Q2 26 2 17V6Z" {...stroke} strokeWidth="2.500" /><path d="M14.500 1V32Q2 26 2 17V6Z" fill="currentColor" /></svg>
                </Tool>
                <AddressBar>
                  <Url>
                    <svg width="16" height="24" viewBox="0 0 16 24"><path d="M3.500 11V6.500Q3.500 1.500 8 1.500Q12.500 1.500 12.500 6.500V11" fill="none" stroke="#dddbd9" strokeWidth="2.200" /><rect y="10" width="16" height="13.500" rx="2.500" fill="#dddbd9" /></svg>
                    fultonapps.asu.edu
                  </Url>
                  <Reload><svg width="23" height="26" {...stroke} strokeWidth="2.300"><path d="M14.500 6.500A9.200 9.200 0 1 0 20.500 15" /><path d="M10.500 1.500L15.500 6.500L10.500 11.500" /></svg></Reload>
                </AddressBar>
                <Tool $ml={390} $w={34}><svg width="34" height="34" {...stroke} strokeWidth="2.500"><circle cx="17" cy="17" r="15.500" /><path d="M17 9V24M11.500 19L17 24.500L22.500 19" /></svg></Tool>
                <Tool $ml={43} $w={36}><DotGrid w={36} h={26} s={6} /></Tool>
                <Tool $ml={43} $w={39} $up={4}><svg width="39" height="37" {...stroke} strokeWidth="2.400"><path d="M19.500 2L24 14.200L37 14.700L26.800 22.700L30.300 35L19.500 27.900L8.700 35L12.200 22.700L2 14.700L15 14.200Z" /></svg></Tool>
                <Tool $ml={42} $w={30} $up={4}><svg width="30" height="38" {...stroke} strokeWidth="2.500"><path d="M10 13.500H5Q1.500 13.500 1.500 17V33Q1.500 36.500 5 36.500H25Q28.500 36.500 28.500 33V17Q28.500 13.500 25 13.500H20M15 24V2M9.500 7.500L15 2L20.500 7.500" /></svg></Tool>
                <Tool $ml={44} $w={27} $up={3}><svg width="27" height="27" {...stroke} strokeWidth="2.700"><path d="M13.500 1.500V25.500M1.500 13.500H25.500" /></svg></Tool>
                <Tool $ml={45} $w={36} $up={2}><svg width="36" height="36" {...stroke} strokeWidth="2.500"><rect x="9.500" y="9.500" width="25" height="25" rx="4.500" /><path d="M9 26H5.500Q1.500 26 1.500 22V5.500Q1.500 1.500 5.500 1.500H22Q26 1.500 26 5.500V9" /></svg></Tool>
              </Toolbar>
              <BookmarkRow>
                <BookmarkGrid><DotGrid w={26} h={18} s={4} /></BookmarkGrid>
                <Bookmark $w={106}>Google</Bookmark>
                <Bookmark $w={290}>Discover on SoundCloud</Bookmark>
                <Bookmark $w={120}>YouTube</Bookmark>
                <Bookmark $w={113}>My ASU</Bookmark>
                <Bookmark $w={130}>BrytreWave</Bookmark>
              </BookmarkRow>
              <Tabs />
            </Chrome>

            <UtilityNav>
              <NavLink $w={165}>ASU home</NavLink>
              <NavLink $w={132}>My ASU</NavLink>
              <NavLink $w={316}>Colleges and schools</NavLink>
              <NavLink $w={277}><b>Trevor</b> (Sign Out)</NavLink>
              <FaSearch size={24} color="#000" />
            </UtilityNav>
            <SiteHeader>
              <Brand>
                <AsuLogo />
                <BrandName>Arizona State<br />University</BrandName>
              </Brand>
              <SiteTitles>
                <College>Ira A. Fulton Schools of Engineering</College>
                <SiteName>Instructor Evaluations</SiteName>
              </SiteTitles>
            </SiteHeader>

            <Content>
              <Card $h={374}>
                <CardHead $bg="#951d44" $edge="#7c1839">Available Evaluations</CardHead>
                <CardBody>
                  <Line><LineIcon $w={32} $c="#951d44"><ChevronIcon /></LineIcon><A>ASU101-MEE Ren (Yi Ren)</A></Line>
                  <Line><LineIcon $w={51} $c="#55902a"><FaCheck size={32} /></LineIcon>FSE100 Baumann (Alicia Baumann)</Line>
                </CardBody>
              </Card>
              <Card $h={374}>
                <CardHead $bg="#0a203d" $edge="#07172f">Outstanding Teacher Nominations</CardHead>
                <CardBody>
                  <Line><LineIcon $w={32}><ChevronIcon /></LineIcon><A>Nominate Alicia Baumann </A>(FSE100 Baumann)</Line>
                  <Line><LineIcon $w={32}><ChevronIcon /></LineIcon><A $c="#0000ff">Nominate Yi Ren </A>(ASU101-MEE Ren)</Line>
                </CardBody>
              </Card>
              <Card $h={500}>
                <CardBody>
                  <Line><LineIcon $w={51}><FaPencilAlt size={32} /></LineIcon>There is <Strong>1</Strong> evaluation left for you to take.</Line>
                  <Line><LineIcon $w={51}><FaRegClock size={32} /></LineIcon>Evaluations will be available through midnight on <Strong>Thursday, November 30</Strong>.</Line>
                  <Line><LineIcon $w={50}><LockIcon /></LineIcon><Strong>Your responses will remain confidential.</Strong></Line>
                  <Line><LineIcon $w={51}><FaWrench size={32} /></LineIcon>If you are experiencing technical problems send an e-mail to the <A $c="#0a203d">evaluation administrator</A>.</Line>
                </CardBody>
              </Card>
            </Content>
          </Window>

          <Dock><DockApps /></Dock>
        </Workspace>
      </Desktop>
    </>
  );
}
